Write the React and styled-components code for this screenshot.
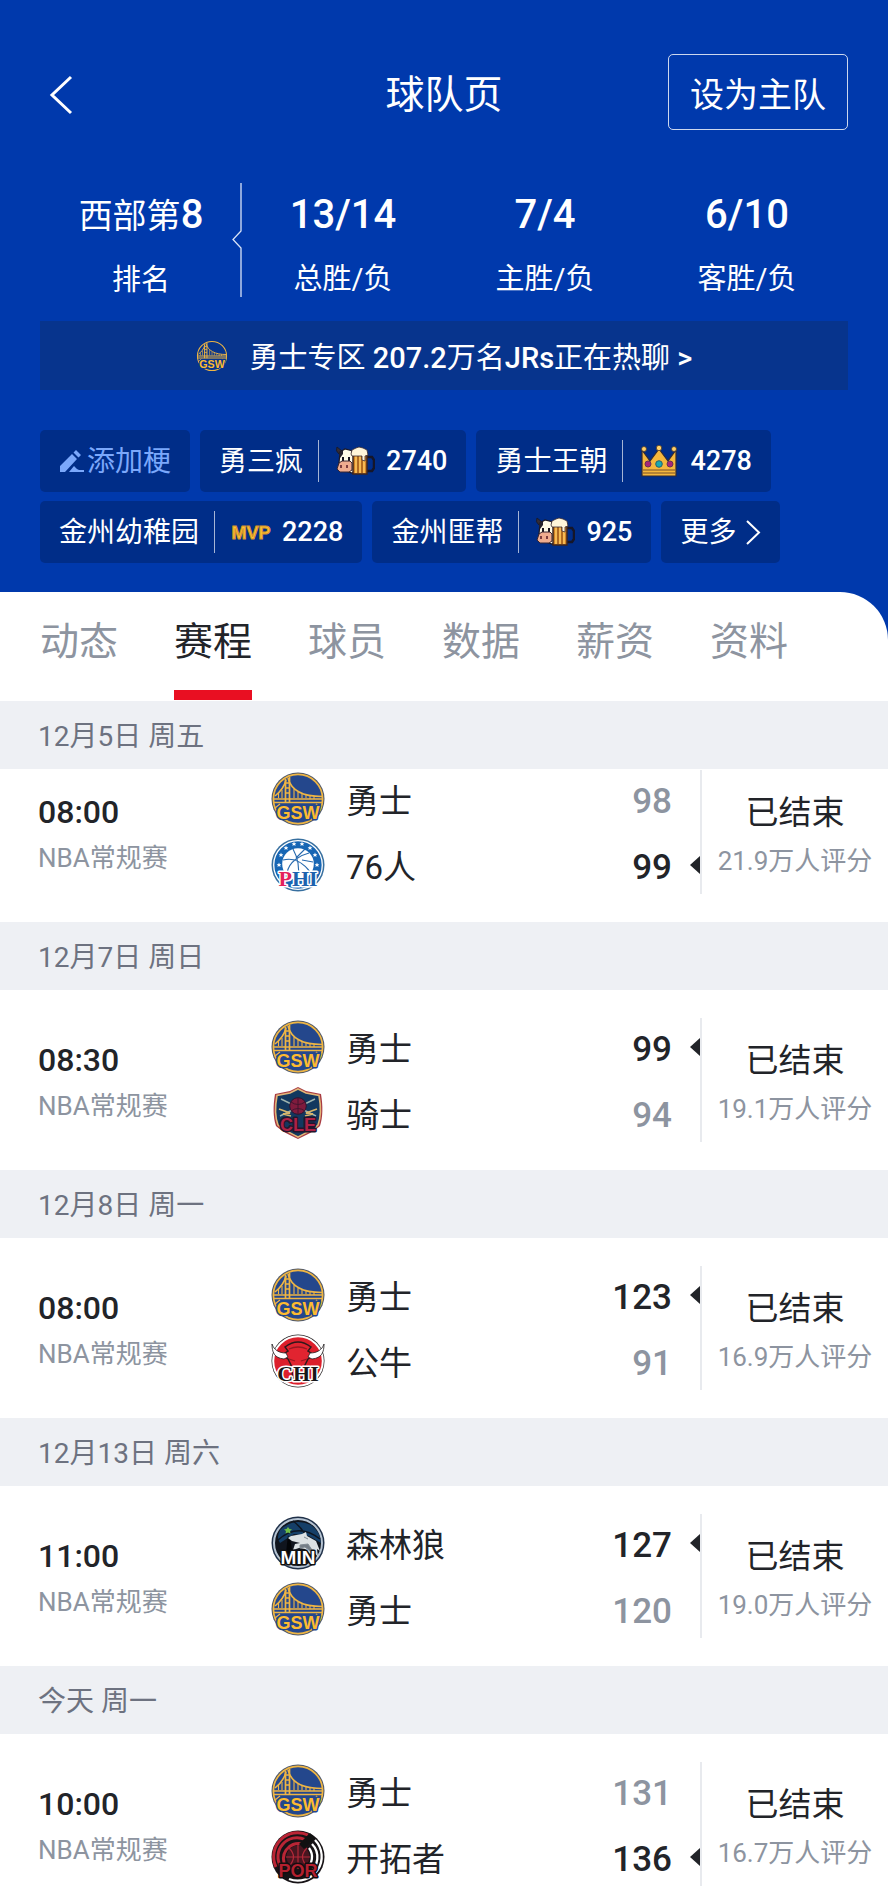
import React from "react";
import styled, { createGlobalStyle, css } from "styled-components";

const color = {
  blue: "#0039ac",
  banner: "#07348d",
  chip: "#002d88",
  link: "#7ba8fb",
  ink: "#222429",
  muted: "#8d94a0",
  date: "#6d7280",
  band: "#eef0f4",
  line: "#e8eaee",
  red: "#e90f22",
};

const GlobalStyle = createGlobalStyle`
  *, *::before, *::after { box-sizing: border-box; }
  body {
    margin: 0;
    background: #fff;
    color: ${color.ink};
    font-family: Roboto, "Noto Sans CJK SC", sans-serif;
  }
  h1, h2, p, dl, dd, ul { margin: 0; padding: 0; font-weight: 400; }
  ul { list-style: none; }
  svg { display: block; flex: none; }
  button { font: inherit; color: inherit; background: none; border: 0; padding: 0; cursor: pointer; }
`;

const Hero = styled.header`
  background: ${color.blue};
  color: #fff;
  padding: 54px 40px 29px;
`;

const TopBar = styled.div`
  display: grid;
  grid-template-columns: 1fr auto 1fr;
  align-items: center;
  height: 76px;
`;

const BackButton = styled.button`
  justify-self: start;
  padding: 14px 9px 8px;
`;

const PageTitle = styled.h1`
  padding-top: 6px;
  font-size: 39px;
  line-height: 48px;
`;

const FollowButton = styled.button`
  justify-self: end;
  height: 76px;
  padding: 0 21px;
  border: 1px solid rgba(255, 255, 255, 0.8);
  border-radius: 5px;
  font-size: 34px;
`;

const Stats = styled.dl`
  display: grid;
  grid-template-columns: repeat(4, 1fr);
  margin-top: 53px;
  height: 114px;
`;

const Stat = styled.div`
  position: relative;
  display: flex;
  flex-direction: column-reverse;
  justify-content: flex-end;
  align-items: center;
  padding-top: 4px;
`;

const StatValue = styled.dd`
  font-size: 40px;
  font-weight: 500;
  line-height: 56px;
  white-space: nowrap;
`;

const StatPrefix = styled.span`
  font-size: 34px;
  font-weight: 400;
`;

const StatLabel = styled.dt`
  margin-top: 14px;
  font-size: 29px;
  line-height: 44px;
`;

const Notch = styled.svg`
  position: absolute;
  right: 0;
  top: 0;
`;

const Banner = styled.a`
  display: flex;
  align-items: center;
  justify-content: center;
  gap: 22px;
  height: 69px;
  margin-top: 24px;
  background: ${color.banner};
  color: #fff;
  font-size: 29px;
  text-decoration: none;
  white-space: nowrap;
`;

const BannerText = styled.span`
  padding-bottom: 2px;
`;

const Strong = styled.span`
  font-weight: 500;
`;

const Chips = styled.div`
  display: flex;
  flex-wrap: wrap;
  gap: 9px 10px;
  margin-top: 40px;
`;

const Chip = styled.button`
  display: flex;
  align-items: center;
  height: 62px;
  padding: 0 19px;
  border-radius: 5px;
  background: ${color.chip};
  color: ${(p) => (p.$accent ? color.link : "#fff")};
  font-size: 28px;
  gap: ${(p) => p.$gap || 0}px;
  white-space: nowrap;
`;

const ChipLabel = styled.span`
  padding-bottom: 4px;
`;

const ChipCount = styled.span`
  display: flex;
  align-items: center;
  gap: 11px;
  height: 42px;
  margin-left: 15px;
  padding-left: 16px;
  border-left: 1px solid rgba(255, 255, 255, 0.65);
  font-size: 27px;
  font-weight: 500;
`;

const PanelTop = styled.div`
  background: ${color.blue};
`;

const Tabs = styled.nav`
  display: flex;
  gap: 56px;
  height: 109px;
  padding: 0 40px;
  background: #fff;
  border-top-right-radius: 48px;
`;

const Tab = styled.button`
  height: 108px;
  padding-top: 2px;
  font-size: 39px;
  line-height: 48px;
  border-bottom: 10px solid ${(p) => (p.$active ? color.red : "transparent")};
  color: ${(p) => (p.$active ? color.ink : color.muted)};
  white-space: nowrap;
`;

const DateBand = styled.h2`
  display: flex;
  align-items: center;
  height: 68px;
  padding: 0 38px 2px;
  background: ${color.band};
  color: ${color.date};
  font-size: 28px;
`;

const Game = styled.article`
  display: grid;
  grid-template-columns: 233px 1fr 186px;
  padding: 28px 0 28px 38px;
  ${(p) => p.$first && css`padding-top: 1px;`}
  ${(p) => p.$last && css`padding-bottom: 16px;`}
`;

const Info = styled.div`
  display: flex;
  flex-direction: column;
  gap: ${(p) => (p.$center ? 2 : 0)}px;
  padding-top: ${(p) => (p.$center ? 20 : 19)}px;
  text-align: ${(p) => (p.$center ? "center" : "left")};
`;

const InfoMain = styled.p`
  font-size: ${(p) => (p.$time ? 32 : 33)}px;
  font-weight: ${(p) => (p.$time ? 500 : 400)};
  line-height: 46px;
`;

const InfoSub = styled.p`
  font-size: 26px;
  line-height: 46px;
  color: ${color.muted};
  white-space: nowrap;
`;

const Teams = styled.ul`
  display: flex;
  flex-direction: column;
  gap: 12px;
  height: 124px;
  padding-top: 2px;
  border-right: 2px solid ${color.line};
`;

const Team = styled.li`
  display: flex;
  align-items: center;
  height: 54px;
`;

const TeamName = styled.span`
  flex: 1;
  margin-left: 21px;
  font-size: 33px;
`;

const Score = styled.span`
  padding-top: 5px;
  font-size: 35px;
  font-weight: 500;
  color: ${(p) => (p.$win ? color.ink : color.muted)};
`;

const ArrowSlot = styled.span`
  width: 10px;
  margin-left: 18px;
`;

const SANS = '"Liberation Sans", sans-serif';
const SERIF = '"Liberation Serif", serif';

function LogoText({ children, fill, stroke, serif, size = 17, y = 47, width = 3 }) {
  return (
    <text
      x="27"
      y={y}
      textAnchor="middle"
      fontFamily={serif ? SERIF : SANS}
      fontWeight="700"
      fontSize={size}
      fill={fill}
      stroke={stroke}
      strokeWidth={width}
      strokeLinejoin="round"
      paintOrder="stroke"
    >
      {children}
    </text>
  );
}

function Warriors({ size = 54, base = "#24478c", edge = "#4b5568" }) {
  return (
    <svg width={size} height={size} viewBox="0 0 54 54" aria-hidden="true">
      <circle cx="27" cy="27" r="26.5" fill={edge} />
      <circle cx="27" cy="27" r="24.6" fill={base} stroke="#eeb544" strokeWidth="1.7" />
      <g fill="none" stroke="#eeb544">
        <path d="M14.5 7v24M18.5 5v26" strokeWidth="1.7" />
        <path d="M14.5 11h4M14.5 16h4M14.5 21h4" strokeWidth="1.3" />
        <path d="M17 6C20 18 32 24.500 51 24.500M15 8C13 16 9 20 4 24" strokeWidth="1.6" />
        <path d="M23 17v9M27 20v6M31 22v4M35 23v3M39 24v3M43 24v3M11 18v8M7.500 21v5" strokeWidth="1.1" />
        <path d="M2.500 27h49M2.500 30.500h49" strokeWidth="1.7" />
        <path d="M4 36l5-4M50 36l-5-4" strokeWidth="1.3" />
      </g>
      <LogoText fill="#fdbb30" stroke={base} size={18}>GSW</LogoText>
    </svg>
  );
}

function Sixers() {
  const stars = [[8, 27], [10, 17], [15, 10], [23, 6], [31, 6], [39, 10], [44, 17], [46, 27]];
  return (
    <svg width="54" height="54" viewBox="0 0 54 54" aria-hidden="true">
      <circle cx="27" cy="27" r="26.500" fill="#376f9f" />
      <circle cx="27" cy="27" r="24.300" fill="#1766b4" stroke="#fff" strokeWidth="1.300" />
      {stars.map(([x, y]) => (
        <path
          key={x}
          transform={`translate(${x} ${y})`}
          d="M0-2.400L.7-.7 2.300-.7 1.100.4 1.600 2 0 1-1.600 2-1.100.4-2.300-.7-.7-.7Z"
          fill="#fff"
        />
      ))}
      <circle cx="27" cy="26" r="15.800" fill="#fff" />
      <path
        d="M12 22c11-3 21 3 28 13M22 11c5 9 7 18 5 30M38 15c-8 2-20 8-22 20M25 20l9-9M31 22l11 2"
        fill="none"
        stroke="#2769ad"
        strokeWidth="1.100"
      />
      <LogoText serif size={22} y={48} fill="#1d62ae" stroke="#fff">
        <tspan fill="#e4225b">P</tspan>HI
      </LogoText>
    </svg>
  );
}

function Cavaliers() {
  return (
    <svg width="54" height="54" viewBox="0 0 54 54" aria-hidden="true">
      <path d="M27 1L35 5 50 8C52 20 52 31 49 40 44 45 35 49 27 53 19 49 10 45 5 40 2 31 2 20 4 8L19 5Z" fill="#a83b42" />
      <path d="M27 3L35 7 48 9.500C50 20 50 31 47 39 42 44 34 47 27 51 20 47 12 44 7 39 4 31 4 20 6 9.500L19 7Z" fill="#12385f" stroke="#e0b578" strokeWidth="1.600" />
      <path d="M10 13L45 30M44 13L9 30" stroke="#9db2ae" strokeWidth="1.400" />
      <path d="M8 23l11 4-7 1 8 2M46 23l-11 4 7 1-8 2" stroke="#d8b46a" strokeWidth="1.800" fill="none" />
      <circle cx="27" cy="20" r="8.300" fill="#801b3d" stroke="#2c1630" />
      <path d="M20 16q7 5 14 0M27 12v16M20 25q7-5 14 0" fill="none" stroke="#43152f" />
      <LogoText size={18} y={45} fill="#ad2145" stroke="#24152c">CLE</LogoText>
    </svg>
  );
}

function Bulls() {
  return (
    <svg width="54" height="54" viewBox="0 0 54 54" aria-hidden="true">
      <circle cx="27" cy="27" r="26.500" fill="#292426" />
      <circle cx="27" cy="27" r="24.800" fill="#dc1f2b" stroke="#fff" strokeWidth="2" />
      <path d="M14 13q13-10 26 0l-3 4 6 4-6 4-3 6-2 13H22l-2-13-3-6-6-4 6-4Z" fill="#e12430" stroke="#30191c" strokeWidth="1.500" />
      <path d="M15 19C8 19 3 16 1 10c0 8 2 14 12 15l4-2ZM39 19c7 0 12-3 14-9 0 8-2 14-12 15l-4-2Z" fill="#fff" stroke="#201a1c" strokeWidth=".8" />
      <path d="M18 25l6 2M36 25l-6 2M18 15q9-4 18 0" stroke="#971821" strokeWidth="1.300" fill="none" />
      <LogoText serif size={22} y={47} fill="#17171a" stroke="#fff">CHI</LogoText>
    </svg>
  );
}

function Timberwolves() {
  return (
    <svg width="54" height="54" viewBox="0 0 54 54" aria-hidden="true">
      <circle cx="27" cy="27" r="26.500" fill="#1f3048" />
      <circle cx="27" cy="27" r="24" fill="#10151e" stroke="#b5c3d2" strokeWidth="2" />
      <path d="M9 14Q23 1 40 9q9 6 10 18L38 20 23 18 9 27Q5 22 9 14Z" fill="#153f68" />
      <path d="M7 24q20-18 42-1M22 5q12 9 15 21" fill="none" stroke="#0d1521" strokeWidth="1.500" />
      <path d="M15 37l2-18 3 8 2 13Z" fill="#030508" />
      <path d="M17 11l1.500 2 2.500.5-2 1.500.5 2.500-2.500-1-2.500 1 .5-2.500-2-1.500 2.500-.5Z" fill="#70bf48" />
      <path d="M20 20l11-2 4-2 1 4 9 5 4 10-3-2 1 8-6-7 0 6-7-7-6-1-6 2 2-6 5-1-8-2-4-3Z" fill="#dce1e3" />
      <path d="M29 29l8-1 4 6-2 1-5-4-5 1ZM33 21l4 2" fill="#747d86" stroke="#818b93" />
      <LogoText size={19} y={48} fill="#fff" stroke="#111">MIN</LogoText>
    </svg>
  );
}

function Blazers() {
  return (
    <svg width="54" height="54" viewBox="0 0 54 54" aria-hidden="true">
      <circle cx="27" cy="27" r="26.500" fill="#171316" />
      <g fill="none" strokeWidth="3">
        <path d="M5 37A24 24 0 0 1 37 5M10 37A19 19 0 0 1 34 9.500M15 37A15 15 0 0 1 31 14" stroke="#ba2535" />
        <path d="M44 10A24 24 0 0 1 18 49M41 14A19 19 0 0 1 38 43M38 18A15 15 0 0 1 35 39" stroke="#fff" strokeWidth="2.300" />
      </g>
      <circle cx="27" cy="27" r="11.500" fill="#481620" />
      <path d="M27 15v24M15 27h24M18 18q9 9 0 18M36 18q-9 9 0 18" fill="none" stroke="#b22838" strokeWidth="1.200" />
      <path d="M28 14L39 3l5 5-11 11Z" fill="#111" />
      <LogoText size={18} y={47} fill="#b3202f" stroke="#140d10">POR</LogoText>
    </svg>
  );
}

const TEAMS = {
  gsw: ["勇士", Warriors],
  phi: ["76人", Sixers],
  cle: ["骑士", Cavaliers],
  chi: ["公牛", Bulls],
  min: ["森林狼", Timberwolves],
  por: ["开拓者", Blazers],
};

function CowBeer() {
  return (
    <svg width="40" height="30" viewBox="0 0 40 30" aria-hidden="true">
      <path d="M4 8Q0 5 2 1l5 4" fill="#342c35" stroke="#161b31" />
      <path d="M5 6l5-3 8 2 4 5v15l-5 2-12-4-1-6Z" fill="#fffbe8" stroke="#1c1927" strokeWidth="1.200" />
      <path d="M4 7l4-3 0 4-3 4ZM16 5h5v5h-4Z" fill="#26222d" />
      <rect x="7" y="11" width="2" height="4" fill="#17141f" />
      <rect x="13" y="11" width="2" height="4" fill="#17141f" />
      <path d="M4 17l3-2h8l2 2v7l-3 2H5l-3-3Z" fill="#efac8f" stroke="#382530" />
      <path d="M6 19v3M12 19v3" stroke="#7d3d3f" strokeWidth="2" />
      <path d="M32 11h5l2 3v8l-2 3h-5" fill="none" stroke="#151629" strokeWidth="2.500" />
      <path d="M18 8h14v20H18Z" fill="#d18324" stroke="#3c2420" strokeWidth="1.500" />
      <path d="M21 10v17M25 10v17M29 10v17" stroke="#ffc760" strokeWidth="1.600" />
      <path d="M23 10v17M27 10v17" stroke="#8f5221" />
      <path d="M16 8l1-4 4-2 3-1 4 1 4 2 1 5-3 1v5l-3-1V10H17Z" fill="#fff5d9" stroke="#3b2c32" strokeWidth=".8" />
    </svg>
  );
}

function Crown() {
  return (
    <svg width="40" height="32" viewBox="0 0 40 32" aria-hidden="true">
      <path d="M3 5l8 11L20 4l9 12 8-11v26H3Z" fill="#f5b73d" stroke="#332b34" strokeWidth="1.200" />
      <g fill="#ffd16b" stroke="#4b3829" strokeWidth=".8">
        <circle cx="5" cy="4" r="2.500" />
        <circle cx="20" cy="3" r="2.700" />
        <circle cx="35" cy="4" r="2.500" />
      </g>
      <path d="M4 25h32M4 28h32" stroke="#77512d" strokeWidth="1.200" />
      <circle cx="9" cy="19" r="3" fill="#a82678" stroke="#663255" />
      <circle cx="20" cy="19" r="3.300" fill="#18a9b2" stroke="#27616b" />
      <circle cx="31" cy="19" r="3" fill="#a82678" stroke="#663255" />
    </svg>
  );
}

function Mvp() {
  return (
    <svg width="40" height="32" viewBox="0 0 40 32" role="img" aria-label="MVP">
      <text x="20" y="23" textAnchor="middle" fontFamily={SANS} fontWeight="700" fontSize="18" fill="#ffc332" stroke="#d6942a" strokeWidth="1">
        MVP
      </text>
    </svg>
  );
}

function Pencil() {
  return (
    <svg width="26" height="26" viewBox="0 0 26 26" fill={color.link} aria-hidden="true">
      <path d="M1 18L13 6l5 5L6 24H1ZM14.500 4.500L17 2l5 5-2.500 2.500ZM10 24l5-6 3 3 2 1h5v2Z" />
    </svg>
  );
}

function Chevron({ left, width, height, weight }) {
  return (
    <svg width={width} height={height} viewBox={`0 0 ${width} ${height}`} fill="none" stroke="#fff" strokeWidth={weight} aria-hidden="true">
      <path
        d={
          left
            ? `M${width - 2} 2L3 ${height / 2} ${width - 2} ${height - 2}`
            : `M2 1L${width - 2} ${height / 2} 2 ${height - 1}`
        }
      />
    </svg>
  );
}

const CHIPS = [
  { name: "勇三疯", Icon: CowBeer, count: "2740" },
  { name: "勇士王朝", Icon: Crown, count: "4278" },
  { name: "金州幼稚园", Icon: Mvp, count: "2228" },
  { name: "金州匪帮", Icon: CowBeer, count: "925" },
];

const STATS = [
  { prefix: "西部第", value: "8", label: "排名" },
  { value: "13/14", label: "总胜/负" },
  { value: "7/4", label: "主胜/负" },
  { value: "6/10", label: "客胜/负" },
];

const TABS = ["动态", "赛程", "球员", "数据", "薪资", "资料"];

const GAMES = [
  { date: "12月5日 周五", time: "08:00", rated: "21.9", sides: [["gsw", 98], ["phi", 99]] },
  { date: "12月7日 周日", time: "08:30", rated: "19.1", sides: [["gsw", 99], ["cle", 94]] },
  { date: "12月8日 周一", time: "08:00", rated: "16.9", sides: [["gsw", 123], ["chi", 91]] },
  { date: "12月13日 周六", time: "11:00", rated: "19.0", sides: [["min", 127], ["gsw", 120]] },
  { date: "今天 周一", time: "10:00", rated: "16.7", sides: [["gsw", 131], ["por", 136]] },
];

function TeamLine({ id, score, win }) {
  const [name, Logo] = TEAMS[id];
  return (
    <Team>
      <Logo />
      <TeamName>{name}</TeamName>
      <Score $win={win}>{score}</Score>
      <ArrowSlot>
        {win && (
          <svg width="10" height="18" viewBox="0 0 10 18" aria-hidden="true">
            <path d="M10 0v18L0 9Z" fill={color.ink} />
          </svg>
        )}
      </ArrowSlot>
    </Team>
  );
}

export default function App() {
  return (
    <>
      <GlobalStyle />
      <Hero>
        <TopBar>
          <BackButton aria-label="返回">
            <Chevron left width={24} height={40} weight={3} />
          </BackButton>
          <PageTitle>球队页</PageTitle>
          <FollowButton>设为主队</FollowButton>
        </TopBar>
        <Stats>
          {STATS.map((s) => (
            <Stat key={s.label}>
              <StatLabel>{s.label}</StatLabel>
              <StatValue>
                {s.prefix && <StatPrefix>{s.prefix}</StatPrefix>}
                {s.value}
              </StatValue>
              {s.prefix && (
                <Notch width="10" height="114" viewBox="0 0 10 114" fill="none" stroke="#d9e3f7" strokeWidth="1.300">
                  <path d="M9 0V48L1 56.500 9 65V114" />
                </Notch>
              )}
            </Stat>
          ))}
        </Stats>
        <Banner href="#zone">
          <Warriors size={32} base={color.banner} edge={color.banner} />
          <BannerText>
            勇士专区 <Strong>207.2</Strong>万名<Strong>JRs</Strong>正在热聊 <Strong>&gt;</Strong>
          </BannerText>
        </Banner>
        <Chips>
          <Chip $accent $gap={2}>
            <Pencil />
            <ChipLabel>添加梗</ChipLabel>
          </Chip>
          {CHIPS.map(({ name, Icon, count }) => (
            <Chip key={name}>
              <ChipLabel>{name}</ChipLabel>
              <ChipCount>
                <Icon />
                {count}
              </ChipCount>
            </Chip>
          ))}
          <Chip $gap={9}>
            <ChipLabel>更多</ChipLabel>
            <Chevron width={16} height={25} weight={2} />
          </Chip>
        </Chips>
      </Hero>
      <main>
        <PanelTop>
          <Tabs>
            {TABS.map((t) => (
              <Tab key={t} $active={t === "赛程"} aria-current={t === "赛程" ? "page" : undefined}>
                {t}
              </Tab>
            ))}
          </Tabs>
        </PanelTop>
        {GAMES.map(({ date, time, rated, sides }, i) => {
          const top = Math.max(sides[0][1], sides[1][1]);
          return (
            <section key={date}>
              <DateBand>{date}</DateBand>
              <Game $first={i === 0} $last={i === GAMES.length - 1}>
                <Info>
                  <InfoMain $time>{time}</InfoMain>
                  <InfoSub>NBA常规赛</InfoSub>
                </Info>
                <Teams>
                  {sides.map(([id, score]) => (
                    <TeamLine key={id} id={id} score={score} win={score === top} />
                  ))}
                </Teams>
                <Info $center>
                  <InfoMain>已结束</InfoMain>
                  <InfoSub>{rated}万人评分</InfoSub>
                </Info>
              </Game>
            </section>
          );
        })}
      </main>
    </>
  );
}
